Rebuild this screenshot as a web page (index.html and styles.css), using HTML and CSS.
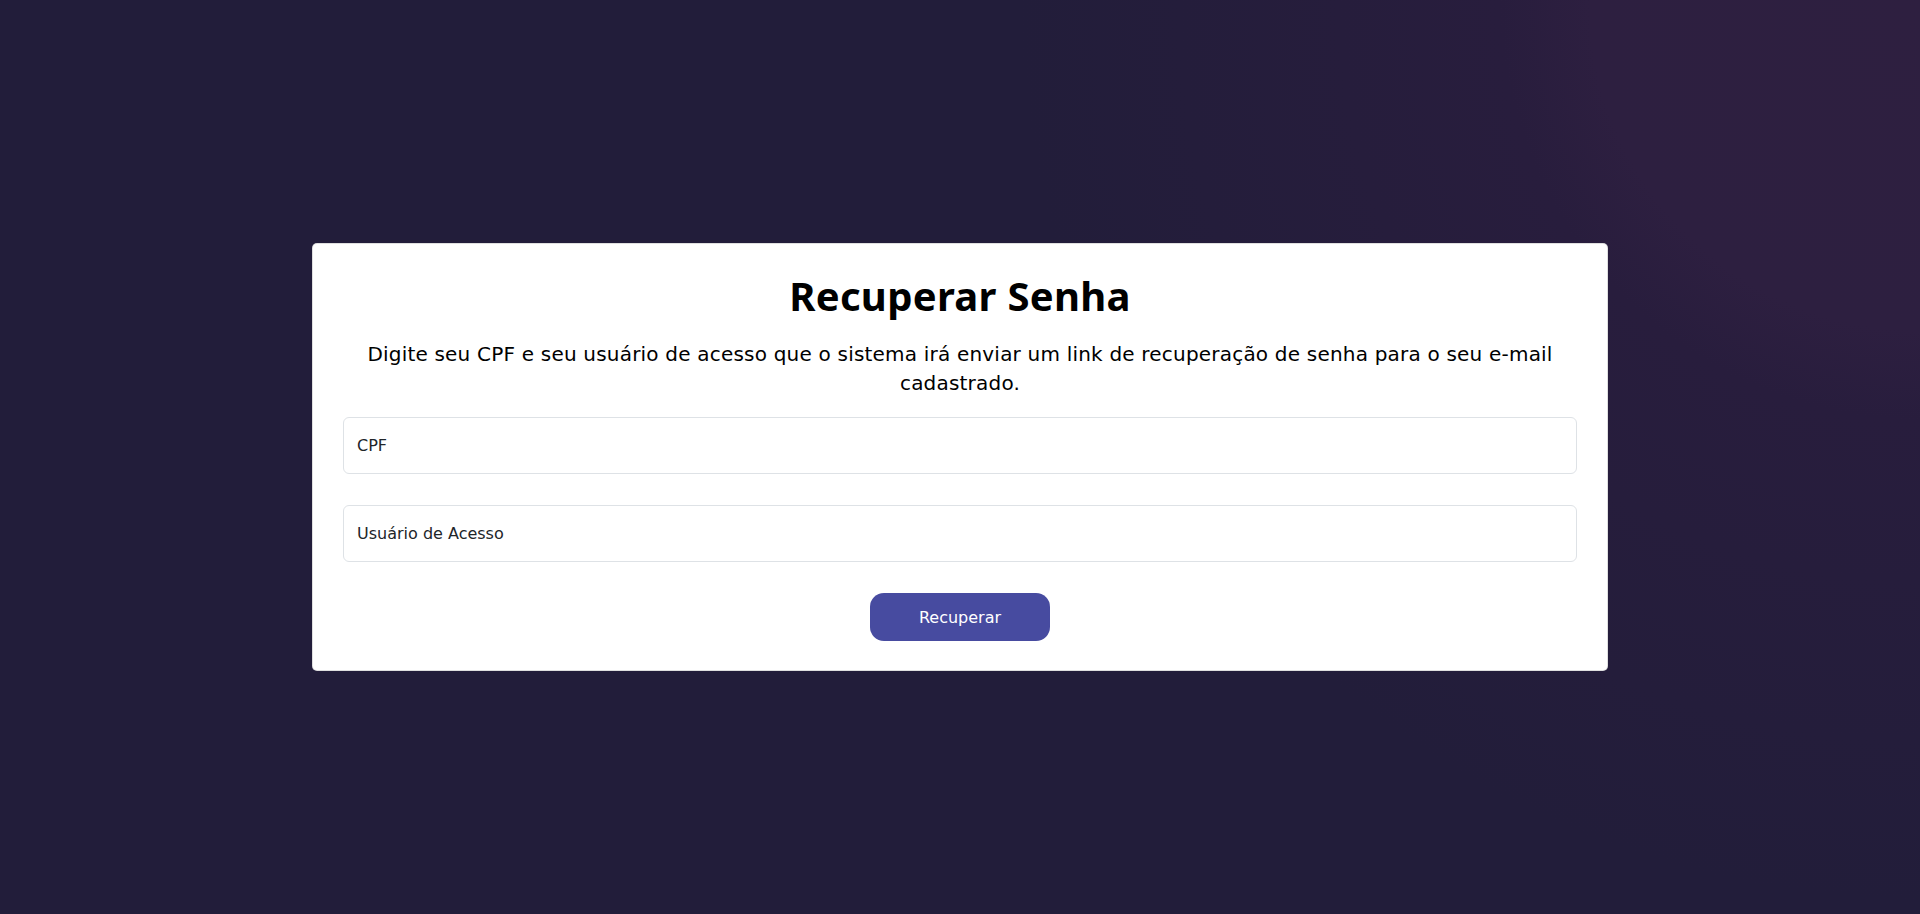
FILE: index.html
```html
<!DOCTYPE html>
<html lang="pt-BR">
<head>
<meta charset="utf-8">
<title>Recuperar Senha</title>
<link rel="stylesheet" href="styles.css">
</head>
<body>
<main class="page">
  <section class="card">
    <h1 class="title">Recuperar Senha</h1>
    <p class="lead">Digite seu CPF e seu usuário de acesso que o sistema irá enviar um link de recuperação de senha para o seu e-mail cadastrado.</p>
    <form class="form">
      <input class="field" type="text" placeholder="CPF">
      <input class="field" type="text" placeholder="Usuário de Acesso">
      <div class="actions">
        <button class="btn" type="button">Recuperar</button>
      </div>
    </form>
  </section>
</main>
</body>
</html>
```

FILE: styles.css
```css
* { box-sizing: border-box; }
html, body { margin: 0; padding: 0; }
body {
  min-height: 100vh;
  font-family: "DejaVu Sans", "Noto Sans", sans-serif;
  color: #000;
  background-color: #221d3a;
  background-image:
    radial-gradient(circle at 100% 0%, #2e1f40 0px, #2d1f40 330px, #281d3d 420px, rgba(34,29,58,0) 900px);
}
.page {
  min-height: 100vh;
  display: flex;
  align-items: center;
  justify-content: center;
}
.card {
  width: 1296px;
  background: #fff;
  border: 1px solid rgba(0,0,0,.125);
  border-radius: 5px;
  padding: 28px 30px 29px;
  display: flex;
  flex-direction: column;
  align-items: center;
}
.title {
  margin: 0;
  font-family: "Noto Sans", sans-serif;
  font-size: 40px;
  line-height: 48px;
  font-weight: 700;
  letter-spacing: 0.3px;
}
.lead {
  margin: 20px 0 19px;
  font-size: 20px;
  line-height: 29px;
  text-align: center;
  letter-spacing: 0.2px;
}
.form {
  width: 100%;
  display: flex;
  flex-direction: column;
  gap: 31px;
}
.field {
  width: 100%;
  height: 57px;
  border: 1px solid #dee2e6;
  border-radius: 6px;
  padding: 0 13px;
  font-family: inherit;
  font-size: 16px;
  color: #212529;
  outline: none;
}
.field::placeholder { color: #212529; opacity: 1; }
.actions {
  display: flex;
  justify-content: center;
}
.btn {
  width: 180px;
  height: 48px;
  border: none;
  border-radius: 14px;
  background: #474ba0;
  color: #fff;
  font-family: inherit;
  font-size: 16px;
  cursor: pointer;
}
```
